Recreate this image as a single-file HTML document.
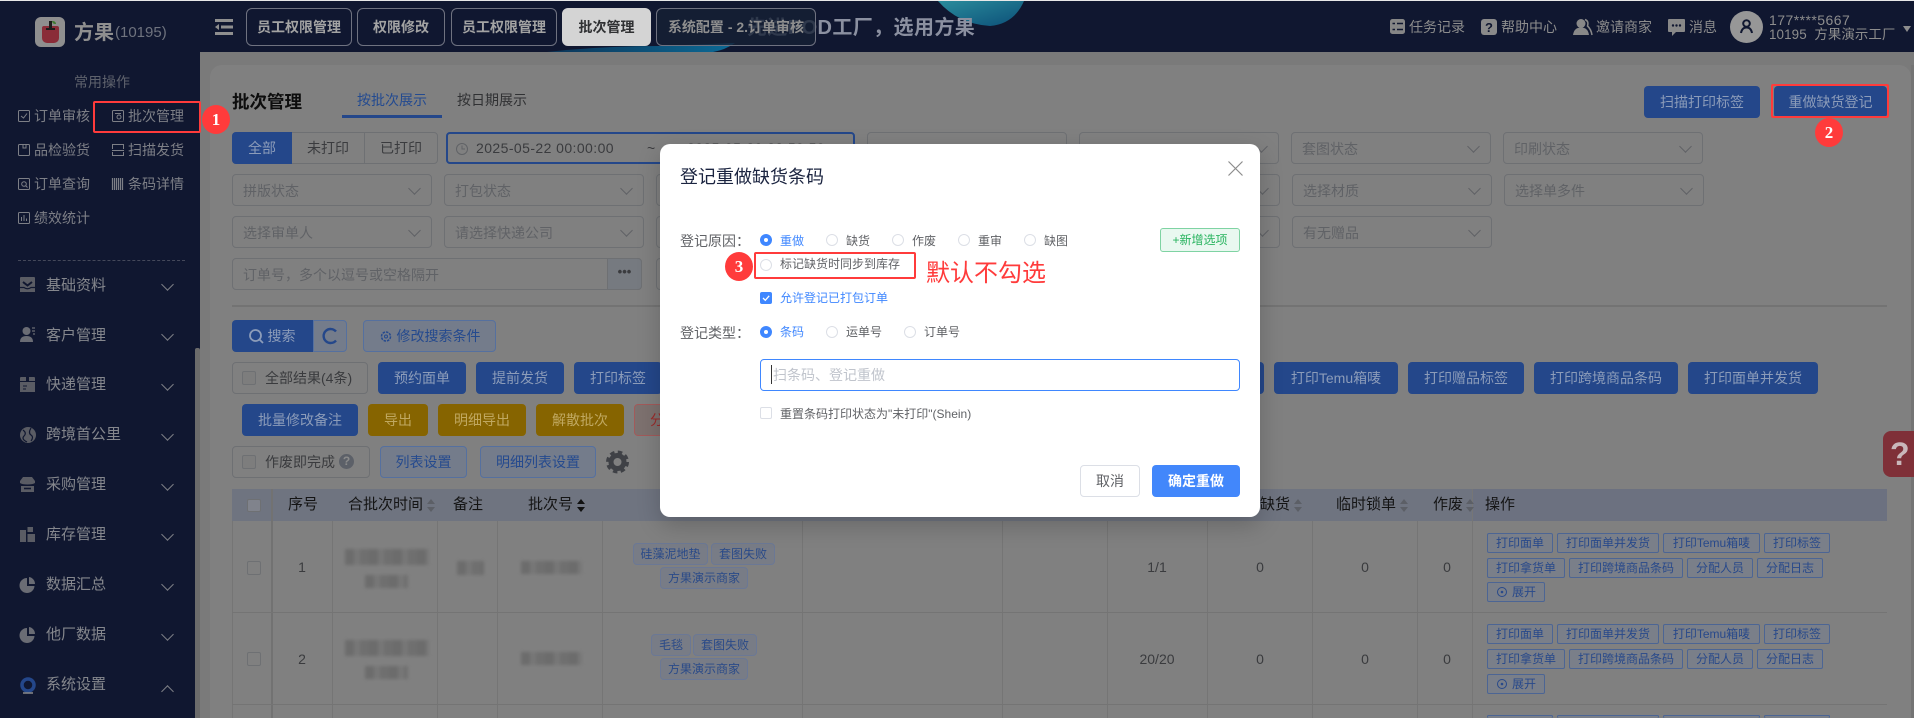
<!DOCTYPE html>
<html lang="zh"><head><meta charset="utf-8"><title>批次管理</title>
<style>
*{box-sizing:border-box}
html,body{margin:0;padding:0;width:1914px;height:718px;overflow:hidden;background:#7a7a7a;font-family:"Liberation Sans","Noto Sans CJK SC",sans-serif;font-size:14px;color:#303133}
body{position:relative}
.a{position:absolute}
.t{position:absolute;white-space:nowrap;line-height:20px;height:20px}
.tab{position:absolute;top:8px;height:38px;border:1px solid #6f7280;border-radius:6px;color:#a3a3a3;font-weight:700;font-size:14px;line-height:36px;text-align:center;white-space:nowrap}
.q{position:absolute;white-space:nowrap;line-height:20px;height:20px;color:#7d7f86}
.m{position:absolute;white-space:nowrap;line-height:20px;height:20px;left:46px;font-size:15px;color:#85878d}
.ch{position:absolute;left:163px;width:9px;height:9px;border-right:1px solid #7d7f86;border-bottom:1px solid #7d7f86;transform:rotate(45deg)}
.s{position:absolute;width:200px;height:32px;border:1px solid #6e7073;border-radius:4px;color:#606266;line-height:32px;padding-left:10px;white-space:nowrap;overflow:hidden}
.s:after{content:"";position:absolute;right:12px;top:9px;width:8px;height:8px;border-right:1px solid #606266;border-bottom:1px solid #606266;transform:rotate(45deg)}
.b{position:absolute;height:32px;border-radius:4px;background:#24478a;color:#8c9cb9;line-height:32px;text-align:center;white-space:nowrap}
.y{background:#866400;color:#c0a860}
.l{background:#747c8b;border:1px solid #55709f;color:#254a8e;line-height:30px}
.c{position:absolute;width:14px;height:14px;border:1px solid #6e7073;border-radius:2px;background:#7d7d7d}
.g{position:absolute;height:32px;border:1px solid #6e7073;border-radius:4px;color:#3a3b3e;line-height:30px;white-space:nowrap}
.h{position:absolute;top:495px;white-space:nowrap;line-height:20px;height:20px;font-size:15px;color:#141414}
.sort{position:absolute;top:499px;width:9px;height:13px}
.sort:before,.sort:after{content:"";position:absolute;left:0;border-left:4.5px solid transparent;border-right:4.5px solid transparent}
.sort:before{top:0;border-bottom:5px solid #5c5f66}
.sort:after{bottom:0;border-top:5px solid #5c5f66}
.k:before{border-bottom-color:#111}.k:after{border-top-color:#111}
.vl{position:absolute;top:521px;width:1px;height:197px;background:#757575}
.hl{position:absolute;left:232px;width:1655px;height:1px;background:#747474}
.d{position:absolute;white-space:nowrap;line-height:20px;height:20px;color:#3a3b3e;text-align:center;transform:translateX(-50%)}
.tg{position:absolute;height:22px;border:1px solid #6b7895;border-radius:4px;background:#787c86;color:#2a4a88;font-size:12px;line-height:20px;text-align:center;white-space:nowrap;overflow:hidden}
.o{position:absolute;height:20px;border:1px solid #4c6594;border-radius:2px;background:#7a7f89;color:#28498a;font-size:12px;line-height:18px;text-align:center;white-space:nowrap;overflow:hidden}
.z{position:absolute;background:repeating-linear-gradient(90deg,#6c6c6c 0 9px,#777 9px 15px,#6f6f6f 15px 24px);filter:blur(1.6px)}
.r{position:absolute;width:12px;height:12px;border:1px solid #dcdfe6;border-radius:50%;background:#fff}
.ro{border:4px solid #3f87ff}
.dt{position:absolute;white-space:nowrap;line-height:18px;height:18px;font-size:12px;color:#606266}
.bl{color:#3f87ff}
.rb{position:absolute;border:2px solid #ff3b3b;border-radius:2px}
.n{position:absolute;width:28px;height:29px;border-radius:50%;background:#ff3b3b;color:#fff;font-family:"Liberation Serif",serif;font-weight:700;font-size:17px;line-height:29px;text-align:center}
svg{position:absolute;overflow:visible}
</style></head><body>

<div class="a" style="left:0;top:0;width:1914px;height:1px;background:#e8e8e8"></div>
<div class="a" style="left:0;top:1px;width:1914px;height:51px;background:#101730"></div>
<div class="a" style="left:0;top:52px;width:200px;height:666px;background:#101730"></div>
<div class="a" style="left:195px;top:348px;width:5px;height:370px;background:#6b6b6b;border-radius:2px 2px 0 0"></div>

<svg style="left:0;top:0" width="1100" height="52">
<defs><linearGradient id="g1" x1="0" x2="1" y1="0" y2="0"><stop offset="0" stop-color="#0c3558"/><stop offset="1" stop-color="#0c6a96"/></linearGradient>
<linearGradient id="g2" x1="0" x2="1" y1="0" y2="1"><stop offset="0" stop-color="#2a8c9c"/><stop offset="1" stop-color="#0c4f78"/></linearGradient></defs>
<path d="M547 52 Q600 46 660 46 L735 43 Q725 50 713 52Z" fill="url(#g1)"/>
<path d="M938 1 Q958 24 990 26 Q1014 24 1024 1Z" fill="url(#g2)"/>
</svg>
<div class="t" style="left:747px;top:14px;font-size:20px;line-height:28px;height:28px;font-weight:700;color:#8b90a0;letter-spacing:.4px">先进POD工厂，选用方果</div>

<!-- logo -->
<div class="a" style="left:35px;top:17px;width:30px;height:30px;background:#8f8f8f;border-radius:6px"></div>
<div class="a" style="left:42px;top:26px;width:17px;height:17px;background:#8a2c38;border-radius:2px 2px 5px 5px"></div>
<div class="a" style="left:49px;top:21px;width:3px;height:9px;background:#1c1c1c"></div>
<div class="a" style="left:46px;top:28px;width:9px;height:2px;background:#1c1c1c"></div>
<div class="a" style="left:52px;top:21px;width:4px;height:3px;background:#3f7a30;border-radius:0 3px 0 3px"></div>
<div class="t" style="left:74px;top:21px;font-size:20px;line-height:24px;height:24px;font-weight:700;color:#8f8f8f">方果</div>
<div class="t" style="left:115px;top:22px;font-size:15px;line-height:22px;height:22px;color:#6f737e">(10195)</div>
<svg style="left:215px;top:19px" width="18" height="16"><path d="M0 1.5H18M6 8H18M0 14.5H18" stroke="#8f8f8f" stroke-width="3"/><path d="M4 5L0 8L4 11Z" fill="#8f8f8f"/></svg>

<div class="tab" style="left:246px;width:106px">员工权限管理</div>
<div class="tab" style="left:357px;width:88px">权限修改</div>
<div class="tab" style="left:451px;width:106px">员工权限管理</div>
<div class="tab" style="left:562px;width:89px;background:#d4d4d4;border-color:#d4d4d4;color:#303133">批次管理</div>
<div class="tab" style="left:656px;width:160px;background:rgba(22,32,52,.78);color:#8f8f8f">系统配置 - 2.订单审核</div>

<!-- header right -->
<svg style="left:1390px;top:19px" width="16" height="16"><rect width="15" height="15" rx="2.5" fill="#868686"/><path d="M7 4.5H13M7 10.5H13M2.5 4.5H5M2.5 10.5H5" stroke="#101730" stroke-width="1.6"/></svg>
<div class="t" style="left:1409px;top:17px;color:#8d8d8d">任务记录</div>
<svg style="left:1481px;top:19px" width="17" height="16"><rect width="16" height="16" rx="3" fill="#8a8a8a"/><text x="8" y="13" text-anchor="middle" font-size="13" font-weight="700" fill="#101730" font-family="Liberation Sans">?</text></svg>
<div class="t" style="left:1501px;top:17px;color:#8d8d8d">帮助中心</div>
<svg style="left:1573px;top:18px" width="20" height="18"><circle cx="8" cy="5.5" r="4.5" fill="#888"/><path d="M0 17Q1 9.5 8 9.5Q15 9.5 16 17Z" fill="#888"/><path d="M12 1.5Q16 3 14.5 8Q18 11 19 17" stroke="#888" stroke-width="1.5" fill="none"/></svg>
<div class="t" style="left:1596px;top:17px;color:#8d8d8d">邀请商家</div>
<svg style="left:1668px;top:19px" width="18" height="17"><path d="M1 0H16Q17 0 17 1V12Q17 13 16 13H8L4 17V13H1Q0 13 0 12V1Q0 0 1 0Z" fill="#888"/><circle cx="5" cy="6.5" r="1.2" fill="#101730"/><circle cx="8.5" cy="6.5" r="1.2" fill="#101730"/><circle cx="12" cy="6.5" r="1.2" fill="#101730"/></svg>
<div class="t" style="left:1689px;top:17px;color:#8d8d8d">消息</div>
<div class="a" style="left:1730px;top:11px;width:33px;height:32px;border-radius:50%;background:#979797"></div>
<svg style="left:1740px;top:19px" width="13" height="15"><circle cx="6.500" cy="4.500" r="3.300" fill="none" stroke="#101730" stroke-width="2"/><path d="M1 14Q2 8.500 6.500 8.500Q11 8.500 12 14" fill="none" stroke="#101730" stroke-width="2"/></svg>
<div class="t" style="left:1769px;top:10px;color:#8d8d8d;letter-spacing:.45px">177****5667</div>
<div class="t" style="left:1769px;top:25px;color:#8d8d8d;font-size:13.4px;letter-spacing:.1px">10195&nbsp; 方果演示工厂</div>
<div class="a" style="left:1903px;top:26px;border-left:4px solid transparent;border-right:4px solid transparent;border-top:6px solid #8d8d8d"></div>

<!-- sidebar -->
<div class="q" style="left:74px;top:72px;color:#5e626c">常用操作</div>
<svg style="left:18px;top:110px" width="12" height="12"><rect x=".5" y=".5" width="11" height="11" rx="1" fill="none" stroke="#7d7f86"/><path d="M3 6L5.500 8L9 3.500" fill="none" stroke="#7d7f86"/></svg>
<div class="q" style="left:34px;top:106px">订单审核</div>
<svg style="left:112px;top:110px" width="12" height="12"><rect x=".5" y=".5" width="11" height="11" rx="1" fill="none" stroke="#7d7f86"/><circle cx="7" cy="7" r="2" fill="none" stroke="#7d7f86"/><path d="M3 3.500H9" stroke="#7d7f86"/></svg>
<div class="q" style="left:128px;top:106px">批次管理</div>
<svg style="left:18px;top:144px" width="12" height="12"><rect x=".5" y=".5" width="11" height="11" rx="1" fill="none" stroke="#7d7f86"/><path d="M5 .5V4H8V.5" fill="none" stroke="#7d7f86"/></svg>
<div class="q" style="left:34px;top:140px">品检验货</div>
<svg style="left:112px;top:144px" width="12" height="12"><path d="M.5 5V.5H11.500V5M.5 8V11.500H11.500V8M0 6.500H12" fill="none" stroke="#7d7f86"/></svg>
<div class="q" style="left:128px;top:140px">扫描发货</div>
<svg style="left:18px;top:178px" width="12" height="12"><rect x=".5" y=".5" width="11" height="11" rx="1" fill="none" stroke="#7d7f86"/><circle cx="6" cy="6" r="2.300" fill="none" stroke="#7d7f86"/><path d="M7.500 7.500L9.500 9.500" stroke="#7d7f86"/></svg>
<div class="q" style="left:34px;top:174px">订单查询</div>
<svg style="left:112px;top:178px" width="12" height="12"><path d="M.5 0V12M2.500 0V12M4.500 0V12M6.500 0V12M8.500 0V12M10.500 0V12" stroke="#7d7f86" stroke-width="1.200"/></svg>
<div class="q" style="left:128px;top:174px">条码详情</div>
<svg style="left:18px;top:212px" width="12" height="12"><rect x=".5" y=".5" width="11" height="11" rx="1" fill="none" stroke="#7d7f86"/><path d="M3.500 9V5M6 9V3M8.500 9V6.500" stroke="#7d7f86"/></svg>
<div class="q" style="left:34px;top:208px">绩效统计</div>
<div class="a" style="left:18px;top:260px;width:167px;border-top:1px dashed #44485a"></div>

<svg style="left:20px;top:277px" width="16" height="16"><path d="M0 1Q0 0 1 0H14Q15 0 15 1V15H0Z" fill="#5a5c64"/><path d="M3 5L7.500 8.500L12 5" fill="none" stroke="#101730" stroke-width="2"/><path d="M0 10.500H4Q7.500 13 11 10.500H15" fill="none" stroke="#101730" stroke-width="1.200"/></svg>
<div class="m" style="top:276px">基础资料</div><div class="ch" style="top:280px"></div>
<svg style="left:20px;top:327px" width="16" height="16"><circle cx="6.500" cy="4" r="4" fill="#6a6c74"/><path d="M0 15Q0 9 6.500 9Q13 9 13 15Z" fill="#6a6c74"/><path d="M12 1H15M12 4H15M13 7H15" stroke="#6a6c74" stroke-width="1.300"/></svg>
<div class="m" style="top:326px">客户管理</div><div class="ch" style="top:330px"></div>
<svg style="left:20px;top:377px" width="16" height="16"><path d="M1 0H6V4H9V0H14Q15 0 15 1V15H0V1Q0 0 1 0Z" fill="#5a5c64"/><path d="M0 4.500H15M3 9H7M3 12H6" stroke="#101730" stroke-width="1"/></svg>
<div class="m" style="top:375px">快递管理</div><div class="ch" style="top:380px"></div>
<svg style="left:20px;top:427px" width="16" height="16"><circle cx="8" cy="8" r="8" fill="#5a5c64"/><path d="M3 3Q7 6 4 9T7 15M11 1Q8 6 11 8T11 14" fill="none" stroke="#101730" stroke-width="1.200"/></svg>
<div class="m" style="top:425px">跨境首公里</div><div class="ch" style="top:430px"></div>
<svg style="left:20px;top:477px" width="16" height="16"><path d="M3 0H12L15 4V6Q13 7.500 7.500 7.500T0 6V4Z" fill="#5a5c64"/><path d="M1 9H14V15H1Z" fill="#5a5c64"/><path d="M4 11.500H11" stroke="#101730" stroke-width="1.600"/></svg>
<div class="m" style="top:475px">采购管理</div><div class="ch" style="top:480px"></div>
<svg style="left:20px;top:527px" width="16" height="16"><path d="M0 3H6V15H0ZM7.500 0H13V5H7.500ZM7.500 7H15V15H7.500Z" fill="#5a5c64"/></svg>
<div class="m" style="top:525px">库存管理</div><div class="ch" style="top:530px"></div>
<svg style="left:20px;top:577px" width="16" height="16"><path d="M7 1A7.500 7.500 0 1 0 14.500 9H7Z" fill="#6a6c74"/><path d="M9 0A7 7 0 0 1 15 7H9Z" fill="#6a6c74"/></svg>
<div class="m" style="top:575px">数据汇总</div><div class="ch" style="top:580px"></div>
<svg style="left:20px;top:627px" width="16" height="16"><path d="M7 1A7.500 7.500 0 1 0 14.500 9H7Z" fill="#6a6c74"/><path d="M9 0A7 7 0 0 1 15 7H9Z" fill="#6a6c74"/></svg>
<div class="m" style="top:625px">他厂数据</div><div class="ch" style="top:630px"></div>
<svg style="left:20px;top:677px" width="16" height="16"><circle cx="8" cy="8" r="6" fill="none" stroke="#24478a" stroke-width="3.500"/><path d="M3 16H13" stroke="#8a8a8a" stroke-width="1.500"/></svg>
<div class="m" style="top:675px">系统设置</div><div class="ch" style="top:687px;transform:rotate(225deg)"></div>

<!-- main panel -->
<div class="a" style="left:210px;top:65px;width:1701px;height:653px;background:#808080;border-radius:12px 12px 0 0"></div>
<div class="a" style="left:1911px;top:65px;width:3px;height:653px;background:#747474"></div>

<div class="t" style="left:232px;top:90px;font-size:17.500px;line-height:24px;height:24px;font-weight:700;color:#0d0d0d">批次管理</div>
<div class="t" style="left:357px;top:90px;color:#234a90">按批次展示</div>
<div class="a" style="left:342px;top:115px;width:100px;height:3px;background:#24478a"></div>
<div class="t" style="left:457px;top:90px;color:#303133">按日期展示</div>

<div class="b" style="left:1644px;top:86px;width:116px">扫描打印标签</div>
<div class="b" style="left:1774px;top:86px;width:113px">重做缺货登记</div>

<!-- segment -->
<div class="a" style="left:232px;top:132px;width:206px;height:32px;border:1px solid #6e7073;border-radius:4px"></div>
<div class="b" style="left:232px;top:132px;width:60px;border-radius:4px 0 0 4px">全部</div>
<div class="t" style="left:307px;top:138px;color:#3a3b3e">未打印</div>
<div class="a" style="left:364px;top:132px;width:1px;height:32px;background:#6e7073"></div>
<div class="t" style="left:380px;top:138px;color:#3a3b3e">已打印</div>

<div class="a" style="left:446px;top:132px;width:409px;height:32px;border:2px solid #24478a;border-radius:4px"></div>
<svg style="left:456px;top:143px" width="12" height="12"><circle cx="6" cy="6" r="5.500" fill="none" stroke="#606266"/><path d="M6 2.500V6H9" fill="none" stroke="#606266"/></svg>
<div class="t" style="left:476px;top:138px;color:#3a3b3e;letter-spacing:.42px">2025-05-22 00:00:00</div>
<div class="t" style="left:647px;top:138px;color:#3a3b3e">~</div>
<div class="t" style="left:687px;top:138px;color:#3a3b3e;letter-spacing:.42px">2025-05-29 23:59:59</div>

<div class="s" style="left:867px;top:132px"></div>
<div class="s" style="left:1079px;top:132px"></div>
<div class="s" style="left:1291px;top:132px">套图状态</div>
<div class="s" style="left:1503px;top:132px">印刷状态</div>

<div class="s" style="left:232px;top:174px">拼版状态</div>
<div class="s" style="left:444px;top:174px">打包状态</div>
<div class="s" style="left:656px;top:174px"></div>
<div class="s" style="left:868px;top:174px"></div>
<div class="s" style="left:1080px;top:174px"></div>
<div class="s" style="left:1292px;top:174px">选择材质</div>
<div class="s" style="left:1504px;top:174px">选择单多件</div>

<div class="s" style="left:232px;top:216px">选择审单人</div>
<div class="s" style="left:444px;top:216px">请选择快递公司</div>
<div class="s" style="left:656px;top:216px"></div>
<div class="s" style="left:868px;top:216px"></div>
<div class="s" style="left:1080px;top:216px"></div>
<div class="s" style="left:1292px;top:216px">有无赠品</div>

<div class="a" style="left:232px;top:258px;width:410px;height:32px;border:1px solid #6e7073;border-radius:4px;color:#606266;line-height:32px;padding-left:10px">订单号，多个以逗号或空格隔开</div>
<div class="a" style="left:607px;top:258px;width:35px;height:32px;background:#767a80;border:1px solid #6e7073;border-radius:0 4px 4px 0;color:#3a3b3e;font-weight:700;font-size:13px;line-height:26px;text-align:center">•••</div>
<div class="s" style="left:656px;top:258px"></div>
<div class="a" style="left:232px;top:305px;width:1655px;height:2px;background:#737373"></div>

<div class="b" style="left:232px;top:320px;width:81px;border-radius:4px 0 0 4px;padding-left:18px;height:32px">搜索</div>
<svg style="left:249px;top:329px" width="15" height="15"><circle cx="6.500" cy="6.500" r="5.500" fill="none" stroke="#8c9cb9" stroke-width="1.800"/><path d="M10.500 10.500L14 14" stroke="#8c9cb9" stroke-width="1.800"/></svg>
<div class="a" style="left:313px;top:320px;width:34px;height:32px;background:#747c8b;border:1px solid #55709f;border-radius:0 4px 4px 0"></div>
<svg style="left:322px;top:328px" width="16" height="16"><path d="M14 3.500A7 7 0 1 0 14 12.500" fill="none" stroke="#24478a" stroke-width="2.400"/></svg>
<div class="b l" style="left:363px;top:320px;width:133px;padding-left:18px">修改搜索条件</div>
<svg style="left:380px;top:330px" width="12" height="13"><circle cx="6" cy="6.500" r="4.500" fill="none" stroke="#254a8e" stroke-width="1.500" stroke-dasharray="2.500 1"/><circle cx="6" cy="6.500" r="1.500" fill="none" stroke="#254a8e"/></svg>

<div class="g" style="left:232px;top:362px;width:136px;padding-left:32px">全部结果(4条)</div>
<div class="c" style="left:242px;top:371px"></div>
<div class="b" style="left:378px;top:362px;width:88px">预约面单</div>
<div class="b" style="left:476px;top:362px;width:88px">提前发货</div>
<div class="b" style="left:574px;top:362px;width:88px">打印标签</div>
<div class="b" style="left:1176px;top:362px;width:88px"></div>
<div class="b" style="left:1274px;top:362px;width:124px">打印Temu箱唛</div>
<div class="b" style="left:1408px;top:362px;width:116px">打印赠品标签</div>
<div class="b" style="left:1534px;top:362px;width:144px">打印跨境商品条码</div>
<div class="b" style="left:1688px;top:362px;width:130px">打印面单并发货</div>

<div class="b" style="left:242px;top:404px;width:116px">批量修改备注</div>
<div class="b y" style="left:368px;top:404px;width:60px">导出</div>
<div class="b y" style="left:438px;top:404px;width:88px">明细导出</div>
<div class="b y" style="left:536px;top:404px;width:88px">解散批次</div>
<div class="b" style="left:634px;top:404px;width:60px;background:#7d716f;border:1px solid #a25a5a;color:#9a2a2a;line-height:30px">分配</div>

<div class="g" style="left:232px;top:446px;width:138px;padding-left:32px">作废即完成</div>
<div class="c" style="left:242px;top:455px"></div>
<div class="a" style="left:339px;top:454px;width:15px;height:15px;border-radius:50%;background:#5c6068;color:#8b8b8b;font-size:12px;font-weight:700;line-height:15px;text-align:center">?</div>
<div class="b l" style="left:380px;top:446px;width:87px">列表设置</div>
<div class="b l" style="left:480px;top:446px;width:116px">明细列表设置</div>
<svg style="left:606px;top:451px" width="23" height="22"><circle cx="11.500" cy="11" r="6.500" fill="none" stroke="#3f4146" stroke-width="5"/><circle cx="11.500" cy="11" r="10" fill="none" stroke="#3f4146" stroke-width="3" stroke-dasharray="4.500 3.350"/></svg>

<!-- table -->
<div class="a" style="left:232px;top:489px;width:1655px;height:32px;background:#6f7480"></div>
<div class="a" style="left:271px;top:489px;width:2px;height:229px;background:#727272"></div>
<div class="a" style="left:1472px;top:489px;width:1px;height:229px;background:#767676"></div>
<div class="a" style="left:1473px;top:489px;width:414px;height:32px;background:#6c7180"></div>
<div class="vl" style="left:232px"></div><div class="vl" style="left:332px"></div><div class="vl" style="left:437px"></div><div class="vl" style="left:497px"></div><div class="vl" style="left:602px"></div><div class="vl" style="left:802px"></div><div class="vl" style="left:1002px"></div><div class="vl" style="left:1107px"></div><div class="vl" style="left:1207px"></div><div class="vl" style="left:1312px"></div><div class="vl" style="left:1417px"></div>
<div class="hl" style="top:612px"></div><div class="hl" style="top:704px"></div>

<div class="c" style="left:247px;top:499px;height:13px;background:#80838c"></div>
<div class="h" style="left:288px">序号</div>
<div class="h" style="left:348px">合批次时间</div><div class="sort" style="left:427px"></div>
<div class="h" style="left:453px">备注</div>
<div class="h" style="left:528px">批次号</div><div class="sort k" style="left:577px"></div>
<div class="h" style="left:1260px">缺货</div><div class="sort" style="left:1294px"></div>
<div class="h" style="left:1336px">临时锁单</div><div class="sort" style="left:1400px"></div>
<div class="h" style="left:1433px">作废</div><div class="sort" style="left:1466px"></div>
<div class="h" style="left:1485px">操作</div>

<div class="c" style="left:247px;top:561px;background:#808080"></div>
<div class="c" style="left:247px;top:652px;background:#808080"></div>
<div class="d" style="left:302px;top:557px">1</div>
<div class="d" style="left:302px;top:649px">2</div>
<div class="z" style="left:345px;top:549px;width:84px;height:16px"></div>
<div class="z" style="left:365px;top:575px;width:43px;height:13px"></div>
<div class="z" style="left:457px;top:561px;width:27px;height:14px"></div>
<div class="z" style="left:521px;top:561px;width:61px;height:13px"></div>
<div class="z" style="left:345px;top:640px;width:84px;height:16px"></div>
<div class="z" style="left:365px;top:666px;width:43px;height:13px"></div>
<div class="z" style="left:521px;top:652px;width:61px;height:13px"></div>

<div class="tg" style="left:633px;top:543px;width:75px">硅藻泥地垫</div>
<div class="tg" style="left:711px;top:543px;width:64px">套图失败</div>
<div class="tg" style="left:660px;top:567px;width:88px">方果演示商家</div>
<div class="tg" style="left:651px;top:634px;width:40px">毛毯</div>
<div class="tg" style="left:693px;top:634px;width:64px">套图失败</div>
<div class="tg" style="left:660px;top:658px;width:88px">方果演示商家</div>

<div class="d" style="left:1157px;top:557px">1/1</div><div class="d" style="left:1260px;top:557px">0</div><div class="d" style="left:1365px;top:557px">0</div><div class="d" style="left:1447px;top:557px">0</div>
<div class="d" style="left:1157px;top:649px">20/20</div><div class="d" style="left:1260px;top:649px">0</div><div class="d" style="left:1365px;top:649px">0</div><div class="d" style="left:1447px;top:649px">0</div>

<div class="o" style="left:1487px;top:533px;width:66px">打印面单</div><div class="o" style="left:1557px;top:533px;width:102px">打印面单并发货</div><div class="o" style="left:1663px;top:533px;width:97px">打印Temu箱唛</div><div class="o" style="left:1764px;top:533px;width:66px">打印标签</div>
<div class="o" style="left:1487px;top:558px;width:78px">打印拿货单</div><div class="o" style="left:1569px;top:558px;width:114px">打印跨境商品条码</div><div class="o" style="left:1687px;top:558px;width:66px">分配人员</div><div class="o" style="left:1757px;top:558px;width:66px">分配日志</div>
<div class="o" style="left:1487px;top:582px;width:58px;padding-left:16px">展开</div>
<svg style="left:1497px;top:587px" width="10" height="10"><circle cx="5" cy="5" r="4.500" fill="none" stroke="#28498a"/><circle cx="5" cy="5" r="1.300" fill="#28498a"/></svg>

<div class="o" style="left:1487px;top:624px;width:66px">打印面单</div><div class="o" style="left:1557px;top:624px;width:102px">打印面单并发货</div><div class="o" style="left:1663px;top:624px;width:97px">打印Temu箱唛</div><div class="o" style="left:1764px;top:624px;width:66px">打印标签</div>
<div class="o" style="left:1487px;top:649px;width:78px">打印拿货单</div><div class="o" style="left:1569px;top:649px;width:114px">打印跨境商品条码</div><div class="o" style="left:1687px;top:649px;width:66px">分配人员</div><div class="o" style="left:1757px;top:649px;width:66px">分配日志</div>
<div class="o" style="left:1487px;top:674px;width:58px;padding-left:16px">展开</div>
<svg style="left:1497px;top:679px" width="10" height="10"><circle cx="5" cy="5" r="4.500" fill="none" stroke="#28498a"/><circle cx="5" cy="5" r="1.300" fill="#28498a"/></svg>
<div class="o" style="left:1487px;top:715px;width:66px;height:3px;border-bottom:0"></div><div class="o" style="left:1557px;top:715px;width:102px;height:3px;border-bottom:0"></div><div class="o" style="left:1663px;top:715px;width:97px;height:3px;border-bottom:0"></div><div class="o" style="left:1764px;top:715px;width:66px;height:3px;border-bottom:0"></div>

<div class="a" style="left:1883px;top:431px;width:31px;height:46px;background:#7f3038;border-radius:8px 0 0 8px;color:#c9b7ba;font-weight:700;font-size:32px;line-height:46px;padding-left:7px;overflow:hidden">?</div>

<!-- annotations on page -->
<div class="rb" style="left:93px;top:101px;width:108px;height:32px"></div>
<div class="n" style="left:202px;top:105px">1</div>
<div class="rb" style="left:1771px;top:84px;width:118px;height:34px"></div>
<div class="n" style="left:1815px;top:118px">2</div>

<!-- dialog -->
<div class="a" style="left:660px;top:144px;width:600px;height:373px;background:#fff;border-radius:10px;box-shadow:0 8px 24px rgba(0,0,0,.2)"></div>
<div class="t" style="left:680px;top:165px;font-size:18px;line-height:24px;height:24px;color:#1b2440">登记重做缺货条码</div>
<svg style="left:1228px;top:161px" width="15" height="15"><path d="M.5 .5L14.500 14.500M14.500 .5L.5 14.500" stroke="#8c8c8c" stroke-width="1.200"/></svg>

<div class="t" style="left:680px;top:231px;color:#606266">登记原因：</div>
<div class="r ro" style="left:760px;top:234px"></div><div class="dt bl" style="left:780px;top:232px">重做</div>
<div class="r" style="left:826px;top:234px"></div><div class="dt" style="left:846px;top:232px">缺货</div>
<div class="r" style="left:892px;top:234px"></div><div class="dt" style="left:912px;top:232px">作废</div>
<div class="r" style="left:958px;top:234px"></div><div class="dt" style="left:978px;top:232px">重审</div>
<div class="r" style="left:1024px;top:234px"></div><div class="dt" style="left:1044px;top:232px">缺图</div>
<div class="a" style="left:1160px;top:228px;width:80px;height:24px;border:1px solid #7fd3a3;border-radius:3px;background:#e9f8f0;color:#27b35e;font-size:12px;line-height:22px;text-align:center">+新增选项</div>

<div class="r" style="left:760px;top:259px"></div><div class="dt" style="left:780px;top:255px">标记缺货时同步到库存</div>
<div class="rb" style="left:754px;top:252px;width:162px;height:27px"></div>
<div class="n" style="left:725px;top:252px">3</div>
<div class="t" style="left:926px;top:258px;font-size:24px;line-height:32px;height:32px;color:#ff3b3b">默认不勾选</div>

<div class="a" style="left:760px;top:292px;width:12px;height:12px;border-radius:2px;background:#3f87ff"></div>
<svg style="left:760px;top:292px" width="12" height="12"><path d="M3 6L5.300 8.300L9.200 3.800" fill="none" stroke="#fff" stroke-width="1.300"/></svg>
<div class="dt bl" style="left:780px;top:289px">允许登记已打包订单</div>

<div class="t" style="left:680px;top:323px;color:#606266">登记类型：</div>
<div class="r ro" style="left:760px;top:326px"></div><div class="dt bl" style="left:780px;top:323px">条码</div>
<div class="r" style="left:826px;top:326px"></div><div class="dt" style="left:846px;top:323px">运单号</div>
<div class="r" style="left:904px;top:326px"></div><div class="dt" style="left:924px;top:323px">订单号</div>

<div class="a" style="left:760px;top:359px;width:480px;height:32px;border:1px solid #3f87ff;border-radius:4px;background:#fff;color:#c0c4cc;line-height:30px;padding-left:12px">扫条码、登记重做</div>
<div class="a" style="left:771px;top:365px;width:1px;height:19px;background:#333"></div>

<div class="a" style="left:760px;top:407px;width:12px;height:12px;border:1px solid #dcdfe6;border-radius:2px"></div>
<div class="dt" style="left:780px;top:405px">重置条码打印状态为"未打印"(Shein)</div>

<div class="a" style="left:1080px;top:465px;width:60px;height:32px;border:1px solid #dcdfe6;border-radius:4px;background:#fff;color:#606266;line-height:30px;text-align:center">取消</div>
<div class="a" style="left:1152px;top:465px;width:88px;height:32px;border-radius:4px;background:#4287fb;color:#fff;font-weight:700;line-height:32px;text-align:center">确定重做</div>

</body></html>
